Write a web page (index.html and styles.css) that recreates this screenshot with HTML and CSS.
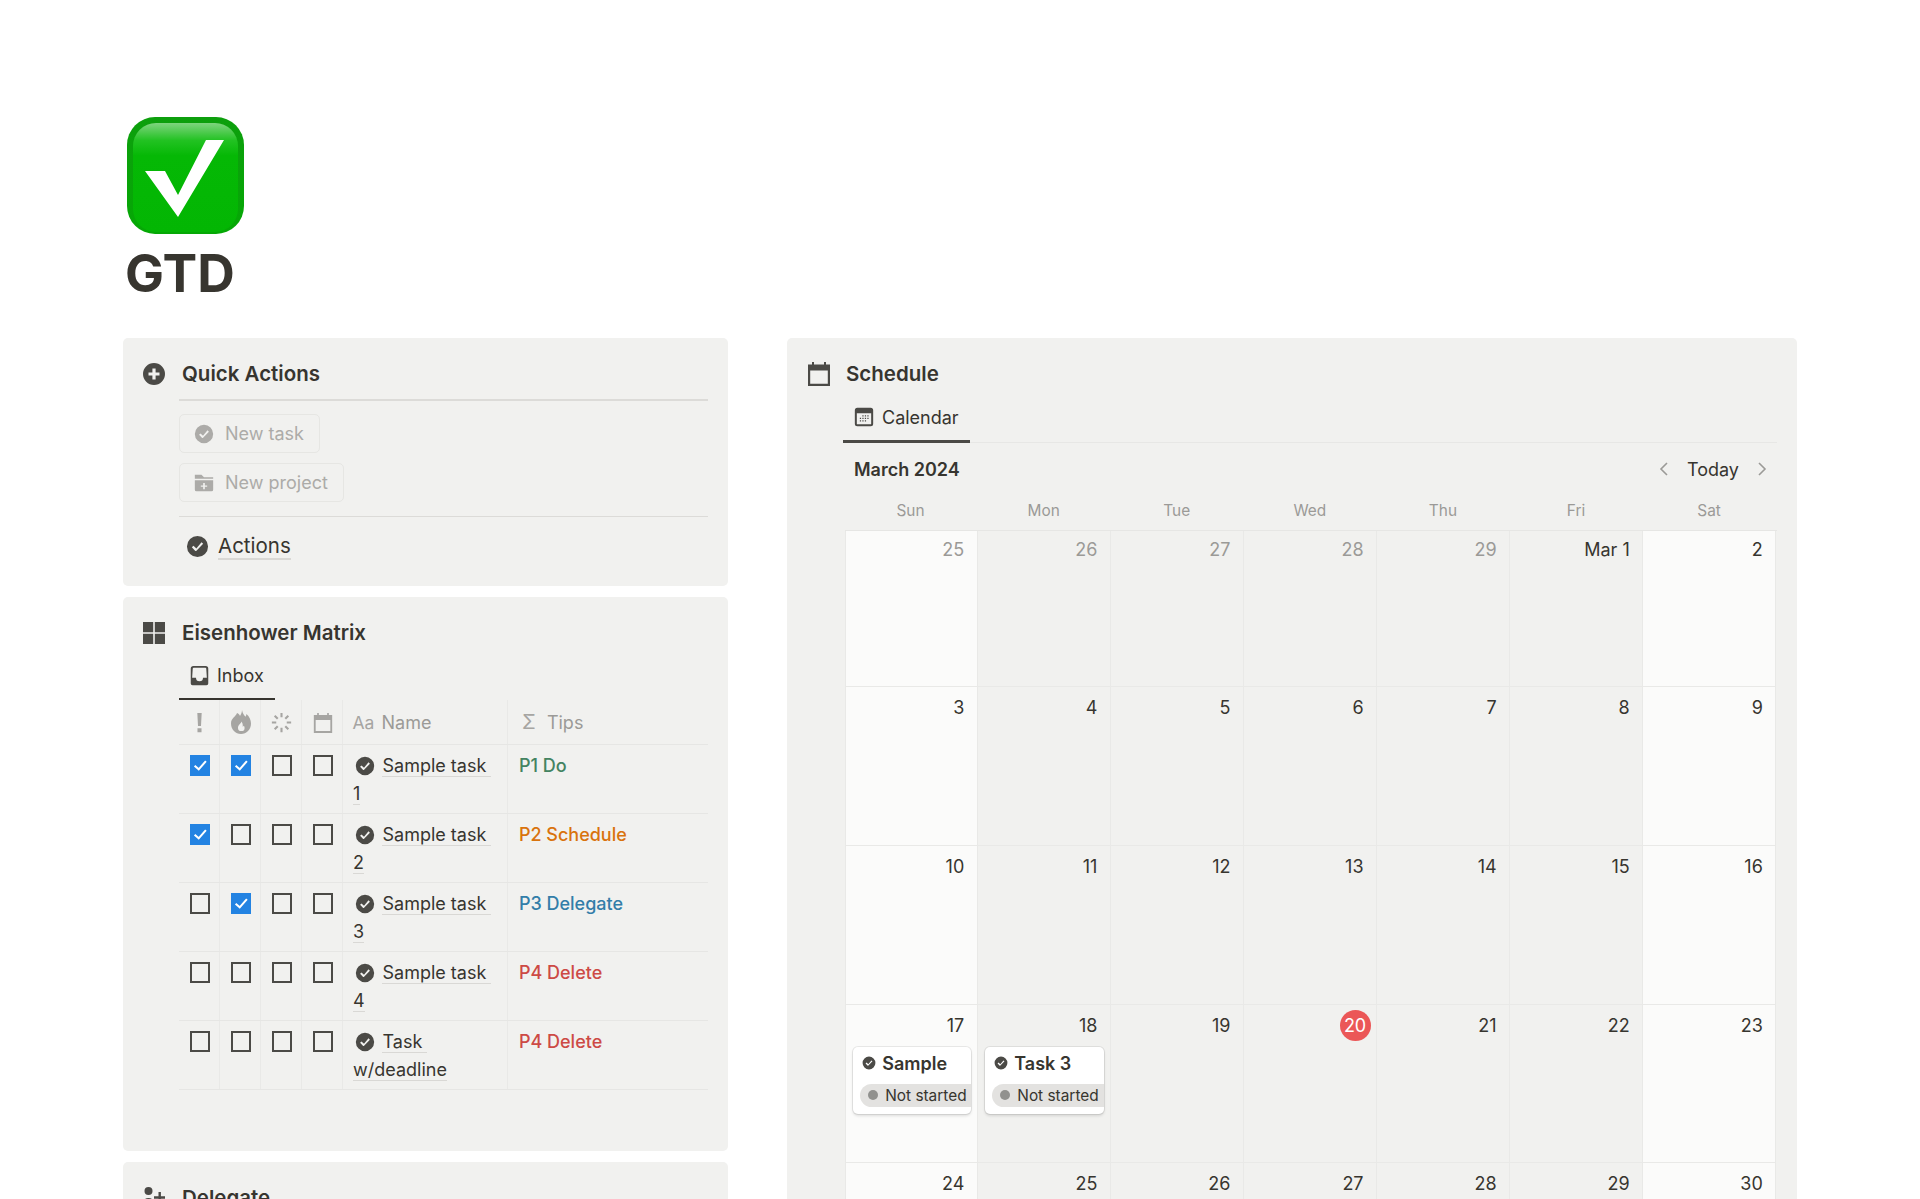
FILE: index.html
```html
<!DOCTYPE html>
<html lang="en">
<head>
<meta charset="utf-8">
<title>GTD</title>
<link rel="stylesheet" href="styles.css">
</head>
<body>
<svg class="defs" aria-hidden="true">
  <defs>
    <linearGradient id="rim" x1="0" y1="0" x2="0" y2="1"><stop offset="0" stop-color="#0d9f0d"/><stop offset="1" stop-color="#05a805"/></linearGradient>
    <linearGradient id="face" x1="0" y1="0" x2="0" y2="1"><stop offset="0" stop-color="#7fd47f"/><stop offset=".16" stop-color="#22c222"/><stop offset=".3" stop-color="#05b805"/><stop offset="1" stop-color="#03b603"/></linearGradient>
  </defs>
  <symbol id="i-check" viewBox="0 0 24 24"><path fill="currentColor" fill-rule="evenodd" d="M12 1a11 11 0 1 0 0 22 11 11 0 0 0 0-22Zm5.900 8.200-7 7.200a1 1 0 0 1-1.400 0l-3.400-3.500 1.700-1.600 3 2.900 5.400-6.600 1.700 1.600Z"/></symbol>
  <symbol id="i-plus" viewBox="0 0 24 24"><path fill="currentColor" fill-rule="evenodd" d="M12 1a11 11 0 1 0 0 22 11 11 0 0 0 0-22Zm-1.600 5.500h3.200v3.900h3.900v3.200h-3.900v3.900h-3.200v-3.900H6.500v-3.200h3.900Z"/></symbol>
  <symbol id="i-grid" viewBox="0 0 24 24"><path fill="currentColor" d="M1 1h10.200v10.200H1zM12.800 1H23v10.200H12.800zM1 12.800h10.200V23H1zM12.800 12.800H23V23H12.800z"/></symbol>
  <symbol id="i-cal" viewBox="0 0 24 24"><path fill="currentColor" fill-rule="evenodd" d="M5 0h2v2.500h10V0h2v2.500h4V24H1V2.500h4ZM3.200 8.400v13.300h17.600V8.400Z"/></symbol>
  <symbol id="i-folder" viewBox="0 0 24 24"><path fill="currentColor" fill-rule="evenodd" d="M1 2h8l3 3.200h11v1.600H1Zm0 6.600h22V20a2 2 0 0 1-2 2H3a2 2 0 0 1-2-2Zm10 3.400v2.900H8.200v1.600H11v2.900h2v-2.900h2.800v-1.600H13V12Z"/></symbol>
  <symbol id="i-inbox" viewBox="0 0 24 24"><path fill="currentColor" fill-rule="evenodd" d="M5 1h14a3 3 0 0 1 3 3v17a2 2 0 0 1-2 2H4a2 2 0 0 1-2-2V4a3 3 0 0 1 3-3Zm.3 2.200a1 1 0 0 0-1 .8L3.600 14.500H8a4 4 0 0 0 8 0h4.400L19.700 4a1 1 0 0 0-1-.8Z"/></symbol>
  <symbol id="i-calview" viewBox="0 0 24 24"><path fill="currentColor" fill-rule="evenodd" d="M4 1h16a3 3 0 0 1 3 3v16a3 3 0 0 1-3 3H4a3 3 0 0 1-3-3V4a3 3 0 0 1 3-3Zm-.6 6.600V20c0 .4.300.7.700.7h15.800c.4 0 .7-.3.700-.7V7.600Z"/><path fill="currentColor" d="M10 10h1.500v1.500H10zM13 10h1.500v1.500H13zM16 10h1.500v1.500H16zM7 13h1.500v1.500H7zM10 13h1.500v1.500H10zM13 13h1.500v1.500H13zM16 13h1.500v1.500H16zM7 16h1.500v1.500H7zM10 16h1.500v1.500H10zM13 16h1.500v1.500H13z"/></symbol>
  <symbol id="i-bang" viewBox="0 0 24 24"><path fill="currentColor" d="M9.500 1h5l-.8 15h-3.400ZM9.700 18.500h4.600V23H9.700Z"/></symbol>
  <symbol id="i-flame" viewBox="0 0 24 24"><path fill="currentColor" fill-rule="evenodd" d="M13 0c.6 3.600 2 5 3.500 6.800.6-.8.8-1.800.9-2.800C20.500 6.500 22 10 22 13.500 22 19.500 17.500 24 12 24S2 19.500 2 13.500C2 8 7 6.500 8 3c1.500.6 2.500 1.700 3 3 1.200-1.800 2-3.800 2-6Zm-.5 11.500c-.3 2-3.500 3.200-3.500 6.200a3.300 3.300 0 0 0 6.600.2c0-.8-.3-1.500-.7-2.100-.3.5-.7.8-1.200.9.3-1.900-.1-3.800-1.200-5.200Z"/></symbol>
  <symbol id="i-spin" viewBox="0 0 24 24"><path fill="none" stroke="currentColor" stroke-width="2.400" d="M12 1v5M12 18v5M1 12h5M18 12h5M4.200 4.200l3.500 3.500M16.300 16.300l3.500 3.500M4.200 19.800l3.500-3.500M16.300 7.700l3.500-3.500"/></symbol>
  <symbol id="i-person" viewBox="0 0 24 24"><circle cx="6.500" cy="5" r="4" fill="currentColor"/><path fill="currentColor" d="M0 20c0-5 2.500-8 6.500-8s6.500 3 6.500 8ZM16.500 6h2.400v4.300H23v2.400h-4.100V17h-2.400v-4.300H12v-2.400h4.500Z"/></symbol>
  <symbol id="i-tick" viewBox="0 0 20 20"><path fill="none" stroke="#fff" stroke-width="2" d="M4.500 10.500 8.500 14l7-8"/></symbol>
</svg>

<main class="page">
  <header class="page-head">
    <svg class="emoji" viewBox="0 0 117 117" role="img" aria-label="Check mark">
      <rect width="117" height="117" rx="28" fill="url(#rim)"/>
      <rect x="6" y="6" width="105" height="109" rx="23" fill="url(#face)"/>
      <path fill="#fff" d="M18 54h20l13 24 28-55h18L51 100Z"/>
    </svg>
    <h1 class="title">GTD</h1>
  </header>

  <div class="columns">
    <div class="col-left">
      <section class="panel panel-quick">
        <div class="panel-head"><svg class="head-icon"><use href="#i-plus"/></svg><h2>Quick Actions</h2></div>
        <div class="panel-body">
          <hr class="rule rule-thick">
          <div class="buttons">
            <div class="btn"><svg class="btn-icon"><use href="#i-check"/></svg>New task</div>
            <div class="btn"><svg class="btn-icon"><use href="#i-folder"/></svg>New project</div>
          </div>
          <hr class="rule">
          <div class="link-row"><svg class="link-icon"><use href="#i-check"/></svg><span class="link">Actions</span></div>
        </div>
      </section>

      <section class="panel panel-matrix">
        <div class="panel-head"><svg class="head-icon"><use href="#i-grid"/></svg><h2>Eisenhower Matrix</h2></div>
        <div class="panel-body">
          <div class="tabs tabs-plain"><div class="tab tab-inbox"><svg class="tab-icon"><use href="#i-inbox"/></svg>Inbox</div></div>
          <table class="matrix">
            <colgroup><col class="c1"><col class="c2"><col class="c3"><col class="c4"><col class="c5"><col class="c6"></colgroup>
            <thead>
              <tr>
                <th><svg class="th-icon"><use href="#i-bang"/></svg></th>
                <th><svg class="th-icon th-flame"><use href="#i-flame"/></svg></th>
                <th><svg class="th-icon"><use href="#i-spin"/></svg></th>
                <th><svg class="th-icon th-cal"><use href="#i-cal"/></svg></th>
                <th class="th-text"><span class="th-sym">Aa</span>Name</th>
                <th class="th-text th-tips"><span class="th-sym sigma">Σ</span>Tips</th>
              </tr>
            </thead>
            <tbody>
              <tr>
                <td><span class="box on"><svg><use href="#i-tick"/></svg></span></td>
                <td><span class="box on"><svg><use href="#i-tick"/></svg></span></td>
                <td><span class="box"></span></td><td><span class="box"></span></td>
                <td class="name"><svg class="name-icon"><use href="#i-check"/></svg><span class="link">Sample task 1</span></td>
                <td class="tip p1">P1 Do</td>
              </tr>
              <tr>
                <td><span class="box on"><svg><use href="#i-tick"/></svg></span></td>
                <td><span class="box"></span></td><td><span class="box"></span></td><td><span class="box"></span></td>
                <td class="name"><svg class="name-icon"><use href="#i-check"/></svg><span class="link">Sample task 2</span></td>
                <td class="tip p2">P2 Schedule</td>
              </tr>
              <tr>
                <td><span class="box"></span></td>
                <td><span class="box on"><svg><use href="#i-tick"/></svg></span></td>
                <td><span class="box"></span></td><td><span class="box"></span></td>
                <td class="name"><svg class="name-icon"><use href="#i-check"/></svg><span class="link">Sample task 3</span></td>
                <td class="tip p3">P3 Delegate</td>
              </tr>
              <tr>
                <td><span class="box"></span></td><td><span class="box"></span></td><td><span class="box"></span></td><td><span class="box"></span></td>
                <td class="name"><svg class="name-icon"><use href="#i-check"/></svg><span class="link">Sample task 4</span></td>
                <td class="tip p4">P4 Delete</td>
              </tr>
              <tr>
                <td><span class="box"></span></td><td><span class="box"></span></td><td><span class="box"></span></td><td><span class="box"></span></td>
                <td class="name"><svg class="name-icon"><use href="#i-check"/></svg><span class="link">Task w/deadline</span></td>
                <td class="tip p4">P4 Delete</td>
              </tr>
            </tbody>
          </table>
        </div>
      </section>

      <section class="panel">
        <div class="panel-head"><svg class="head-icon head-icon-wide"><use href="#i-person"/></svg><h2>Delegate</h2></div>
      </section>
    </div>

    <section class="panel col-right">
      <div class="panel-head"><svg class="head-icon"><use href="#i-cal"/></svg><h2>Schedule</h2></div>
      <div class="panel-body">
        <div class="tabs tabs-lined"><div class="tab tab-cal"><svg class="tab-icon"><use href="#i-calview"/></svg>Calendar</div></div>
        <div class="month-bar">
          <div class="month">March 2024</div>
          <div class="nav">
            <svg class="chev" viewBox="0 0 12 16"><path d="M9 2 3 8l6 6"/></svg>
            <span class="today">Today</span>
            <svg class="chev" viewBox="0 0 12 16"><path d="m3 2 6 6-6 6"/></svg>
          </div>
        </div>
        <div class="weekdays"><div>Sun</div><div>Mon</div><div>Tue</div><div>Wed</div><div>Thu</div><div>Fri</div><div>Sat</div></div>
        <div class="calendar">
          <div class="cell wk"><div class="num muted">25</div></div>
          <div class="cell"><div class="num muted">26</div></div>
          <div class="cell"><div class="num muted">27</div></div>
          <div class="cell"><div class="num muted">28</div></div>
          <div class="cell"><div class="num muted">29</div></div>
          <div class="cell"><div class="num">Mar 1</div></div>
          <div class="cell wk"><div class="num">2</div></div>

          <div class="cell wk"><div class="num">3</div></div>
          <div class="cell"><div class="num">4</div></div>
          <div class="cell"><div class="num">5</div></div>
          <div class="cell"><div class="num">6</div></div>
          <div class="cell"><div class="num">7</div></div>
          <div class="cell"><div class="num">8</div></div>
          <div class="cell wk"><div class="num">9</div></div>

          <div class="cell wk"><div class="num">10</div></div>
          <div class="cell"><div class="num">11</div></div>
          <div class="cell"><div class="num">12</div></div>
          <div class="cell"><div class="num">13</div></div>
          <div class="cell"><div class="num">14</div></div>
          <div class="cell"><div class="num">15</div></div>
          <div class="cell wk"><div class="num">16</div></div>

          <div class="cell wk"><div class="num">17</div>
            <div class="card"><div class="card-title"><svg class="card-icon"><use href="#i-check"/></svg>Sample</div><div class="pill"><i class="dot"></i>Not started</div></div>
          </div>
          <div class="cell"><div class="num">18</div>
            <div class="card"><div class="card-title"><svg class="card-icon"><use href="#i-check"/></svg>Task 3</div><div class="pill"><i class="dot"></i>Not started</div></div>
          </div>
          <div class="cell"><div class="num">19</div></div>
          <div class="cell"><div class="num"><span class="badge">20</span></div></div>
          <div class="cell"><div class="num">21</div></div>
          <div class="cell"><div class="num">22</div></div>
          <div class="cell wk"><div class="num">23</div></div>

          <div class="cell wk"><div class="num">24</div></div>
          <div class="cell"><div class="num">25</div></div>
          <div class="cell"><div class="num">26</div></div>
          <div class="cell"><div class="num">27</div></div>
          <div class="cell"><div class="num">28</div></div>
          <div class="cell"><div class="num">29</div></div>
          <div class="cell wk"><div class="num">30</div></div>
        </div>
      </div>
    </section>
  </div>
</main>
</body>
</html>
```

FILE: styles.css
```css
* { box-sizing: border-box; }
html, body { margin: 0; height: 1199px; overflow: hidden; background: #fff; }
body { font-family: Inter, "Liberation Sans", sans-serif; font-size: 18px; color: #37352f; }
svg { display: block; color: #4b4a46; }
.defs { width: 0; height: 0; position: absolute; }

.page { padding: 117px 123px 0; }
.page-head { height: 221px; padding-left: 4px; }
.emoji { width: 117px; height: 117px; }
.title { margin: 11px 0 0 -2px; font-size: 52px; line-height: 58px; font-weight: 700; }

.columns { display: flex; gap: 59px; align-items: flex-start; }
.col-left { width: 605px; flex: none; display: flex; flex-direction: column; gap: 11px; }
.col-right { width: 1010px; flex: none; }

.panel { background: #f1f1ef; border-radius: 5px; }
.panel-head { display: flex; align-items: center; height: 32px; margin: 20px 20px 0; }
.panel-head h2 { margin: -2px 0 0; font-size: 20.5px; font-weight: 600; }
.head-icon { width: 24px; height: 24px; margin-right: 15px; flex: none; }
.col-left .head-icon { margin-left: -1px; margin-right: 16px; }
.panel-body { margin: 0 20px 0 56px; }

.panel-quick { height: 248px; }
.panel-matrix { height: 554px; }

.rule { border: 0; border-top: 1px solid #dcdbd8; margin: 0; }
.rule-thick { border-top-width: 2px; margin-top: 9px; }
.buttons { display: flex; flex-direction: column; align-items: flex-start; gap: 10px; margin: 13px 0 14px; }
.btn { display: flex; align-items: center; height: 39px; padding: 0 15px 0 14px; border: 1px solid #e6e6e3; border-radius: 5px; color: #acaba8; }
.btn-icon { width: 20px; height: 20px; margin-right: 11px; color: #acaba8; }

.link-row { display: flex; align-items: center; height: 30px; margin-top: 14.5px; padding-left: 7px; }
.link-icon { width: 23px; height: 23px; margin-right: 9px; }
.link { border-bottom: 1px solid #d9d8d5; white-space: pre-wrap; }
.link-row .link { border-bottom-width: 2px; font-size: 20.5px; line-height: 25px; }

.tabs { display: flex; }
.tab { display: flex; align-items: center; height: 49px; border-bottom: 2px solid #37352f; }
.tabs-plain { margin-top: 2px; }
.tab-inbox { padding: 2px 11px 0; }
.tab-cal { padding: 0 11px 0 11px; height: 49px; border-bottom-width: 3px; border-color: #4b4a46; margin-bottom: -1px; }
.tabs-lined { border-bottom: 1px solid #e7e7e5; margin-top: 4px; }
.tab-icon { width: 20px; height: 20px; margin-right: 8px; }
.tab-inbox .tab-icon { width: 21px; height: 21px; margin: 0 7px 0 -1px; }

.matrix { border-collapse: collapse; table-layout: fixed; width: 529px; }
.c1 { width: 40.4px; } .c2, .c3 { width: 41px; } .c4 { width: 41.6px; } .c5 { width: 164.4px; } .c6 { width: 201px; }
.matrix th, .matrix td { border-right: 1px solid #e9e9e7; border-bottom: 1px solid #e6e6e4; padding: 0 0 0 2px; vertical-align: top; }
.matrix th { height: 44px; padding-top: 2px; font-weight: 400; vertical-align: middle; }
.matrix th:last-child, .matrix td:last-child { border-right: 0; }
.matrix td { height: 69px; }
.th-icon { width: 21px; height: 21px; margin: 0 auto; color: #a6a5a2; }
.th-flame { width: 24px; height: 24px; margin-top: -2px; }
.th-cal { width: 20px; height: 20px; }
.matrix .th-text { text-align: left; color: #9b9a97; padding-left: 9px; white-space: nowrap; }
.th-sym { display: inline-block; width: 29px; color: #a6a5a2; font-size: 17.5px; }
.matrix .th-tips { padding-left: 14px; }
.sigma { width: 25px; font-size: 20px; line-height: 20px; }
.box { display: block; width: 20.5px; height: 20.5px; margin: 10.5px auto 0; border: 2px solid #4b4a46; }
.box.on { background: #2383e2; border: 0; }
.box svg { width: 20.5px; height: 20.5px; }
.matrix .name { padding: 7px 12px 0 9.5px; line-height: 28px; }
.name-icon { display: inline-block; width: 20px; height: 20px; margin: 0 7px 0 2.5px; vertical-align: -4px; }
.matrix .tip { padding: 7px 0 0 11px; line-height: 28px; font-weight: 500; }
.p1 { color: #448361; } .p2 { color: #d9730d; } .p3 { color: #337ea9; } .p4 { color: #cd4a45; }

.month-bar { display: flex; align-items: center; justify-content: space-between; height: 44px; margin-top: 4px; padding: 0 9px 0 11px; }
.month { font-weight: 600; }
.nav { display: flex; align-items: center; gap: 17px; }
.chev { width: 12px; height: 16px; }
.chev path { fill: none; stroke: #9b9a97; stroke-width: 1.6; }

.weekdays, .calendar { display: grid; grid-template-columns: repeat(7, 133.1px); margin-left: 1.7px; }
.weekdays { height: 39px; align-items: center; text-align: center; font-size: 15.4px; color: #9b9a97; margin-left: 1px; }
.calendar { grid-template-rows: 156px 159px 159px 157.5px 159px; border-top: 1px solid #e6e6e4; }
.cell { border-right: 1px solid #e9e9e7; border-bottom: 1px solid #e9e9e7; padding: 0 5.5px 0 7px; }
.cell:nth-child(7n+1) { border-left: 1px solid #e9e9e7; }
.cell.wk { background: #fbfbfa; }
.num { display: flex; justify-content: flex-end; height: 34px; padding: 8px 7px 0 0; line-height: 26px; }
.cell:nth-child(-n+7) .num { padding-top: 6px; }
.num.muted { color: #9b9a97; }
.badge { flex: none; width: 31px; height: 31px; margin: -3.5px -7px 0 0; border-radius: 50%; background: #eb5757; color: #fff; text-align: center; line-height: 31px; }
.card { height: 67px; margin-top: 8px; background: #fff; border-radius: 5px; box-shadow: 0 0 0 1px rgba(15,15,15,.08), 0 2px 3px rgba(15,15,15,.12); overflow: hidden; }
.card-title { display: flex; align-items: center; height: 24px; margin: 4px 0 0 9.5px; font-weight: 600; }
.card-icon { width: 14px; height: 14px; margin-right: 6px; }
.pill { display: flex; align-items: center; height: 23px; width: 140px; margin: 8.5px 0 0 7.5px; padding-left: 8px; border-radius: 12px; background: #e3e2e0; font-size: 15.4px; white-space: nowrap; }
.dot { width: 10px; height: 10px; margin-right: 7px; border-radius: 50%; background: #91918e; flex: none; }
```
